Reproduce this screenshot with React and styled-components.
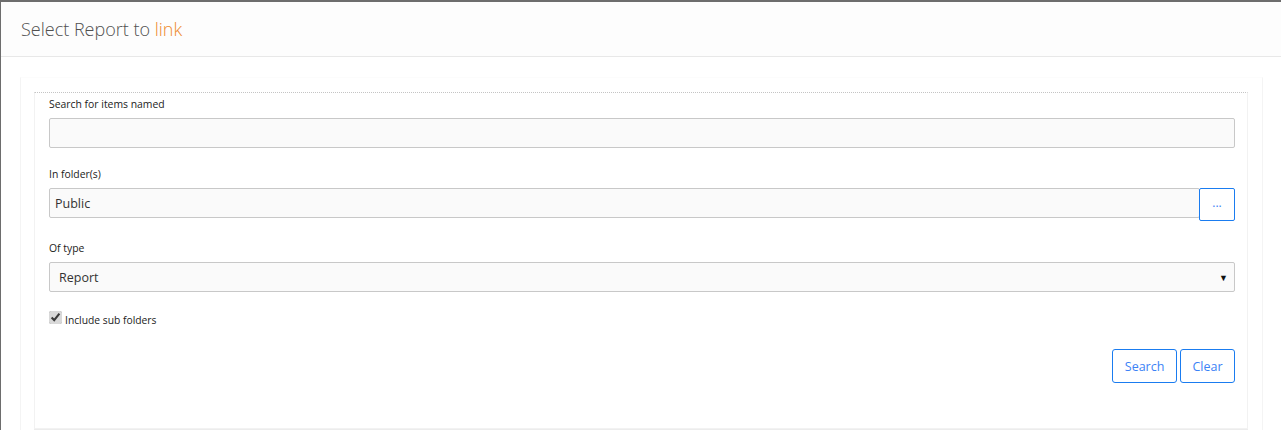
import React, { useState } from 'react'
import styled, { createGlobalStyle } from 'styled-components'

const GlobalStyle = createGlobalStyle`
    html, body {
        margin: 0;
        padding: 0;
        background: #6d6d6d;
        font-family: "Open Sans", "Liberation Sans", sans-serif;
    }
`

const Modal = styled.div`
    margin: 2px 0 0 1px;
    height: 428px;
    background: #fff;
    overflow: hidden;
`

const Header = styled.div`
    height: 54px;
    padding: 0 20px;
    display: flex;
    align-items: center;
    background: #fdfdfd;
    border-bottom: 1px solid #e8e8e8;
`

const Title = styled.h4`
    margin: 0 0 1px;
    font-size: 18px;
    font-weight: 300;
    color: #505050;
`

const Accent = styled.span`
    color: #ee8a2c;
`

const Body = styled.div`
    padding: 20px 18px 0 19px;
`

const OuterPanel = styled.div`
    border: 1px solid #f4f4f4;
    border-top-color: #fcfcfc;
    border-bottom: none;
    padding: 14px 14px 0 13px;
    height: 360px;
`

const InnerPanel = styled.div`
    border: 1px solid #f2f2f2;
    border-top: 1px dotted #c4c4c4;
    padding: 3px 12px 45px 14px;
    box-shadow: 0 1px 0 #ececec;
`

const Group = styled.div`
    margin-bottom: ${p => p.$gap || 18}px;
`

const Label = styled.label`
    display: block;
    font-size: 10.4px;
    line-height: 16px;
    color: #222;
    margin-bottom: 6px;
`

const Input = styled.input`
    box-sizing: border-box;
    display: block;
    width: 100%;
    height: 30px;
    padding: 0 5px;
    font-family: inherit;
    font-size: 12.5px;
    color: #333;
    background: #fafafa;
    border: 1px solid #c8c8c8;
    border-radius: 2px;
    outline: none;
`

const InputRow = styled.div`
    display: flex;
    align-items: flex-start;
`

const BrowseButton = styled.button`
    box-sizing: border-box;
    flex: 0 0 36px;
    height: 33px;
    margin-left: -1px;
    padding: 0 0 4px;
    font-family: inherit;
    font-size: 12px;
    color: #3b82f6;
    background: #fff;
    border: 1px solid #1a7cf0;
    border-radius: 2px;
    cursor: pointer;
`

const SelectBox = styled.div`
    position: relative;
    box-sizing: border-box;
    height: 30px;
    display: flex;
    align-items: center;
    padding: 0 9px;
    font-size: 12.5px;
    color: #333;
    background: #fafafa;
    border: 1px solid #c8c8c8;
    border-radius: 2px;
`

const Arrow = styled.span`
    position: absolute;
    right: 6px;
    top: 8px;
    font-size: 9px;
    color: #111;
`

const CheckRow = styled.label`
    display: flex;
    align-items: flex-start;
    gap: 3px;
    font-size: 10.3px;
    color: #222;
    margin-top: 19px;
`

const CheckText = styled.span`
    line-height: 16px;
    padding-top: 1px;
`

const Check = styled.input`
    margin: 0;
    width: 13px;
    height: 13px;
    accent-color: #d9d9d9;
`

const Actions = styled.div`
    display: flex;
    justify-content: flex-end;
    gap: 3px;
    margin-top: 21px;
`

const Button = styled.button`
    box-sizing: border-box;
    height: 34px;
    padding: 0 11.5px;
    font-family: inherit;
    font-size: 12.5px;
    color: #3b82f6;
    background: #fff;
    border: 1px solid #1a7cf0;
    border-radius: 3px;
    cursor: pointer;
`

function App() {
    const [named, setNamed] = useState('')
    const [folder, setFolder] = useState('Public')
    const [subFolders, setSubFolders] = useState(true)

    return (
        <>
            <GlobalStyle />
            <Modal>
                <Header>
                    <Title>
                        Select Report to <Accent>link</Accent>
                    </Title>
                </Header>
                <Body>
                    <OuterPanel>
                        <InnerPanel>
                            <Group>
                                <Label>Search for items named</Label>
                                <Input
                                    type="text"
                                    value={named}
                                    onChange={e => setNamed(e.target.value)}
                                />
                            </Group>

                            <Group $gap={19}>
                                <Label>In folder(s)</Label>
                                <InputRow>
                                    <Input
                                        type="text"
                                        value={folder}
                                        onChange={e => setFolder(e.target.value)}
                                    />
                                    <BrowseButton>...</BrowseButton>
                                </InputRow>
                            </Group>

                            <Group $gap={0}>
                                <Label>Of type</Label>
                                <SelectBox>
                                    Report
                                    <Arrow>▼</Arrow>
                                </SelectBox>
                            </Group>

                            <CheckRow>
                                <Check
                                    type="checkbox"
                                    checked={subFolders}
                                    onChange={e => setSubFolders(e.target.checked)}
                                />
                                <CheckText>Include sub folders</CheckText>
                            </CheckRow>

                            <Actions>
                                <Button>Search</Button>
                                <Button>Clear</Button>
                            </Actions>
                        </InnerPanel>
                    </OuterPanel>
                </Body>
            </Modal>
        </>
    )
}

export default App
